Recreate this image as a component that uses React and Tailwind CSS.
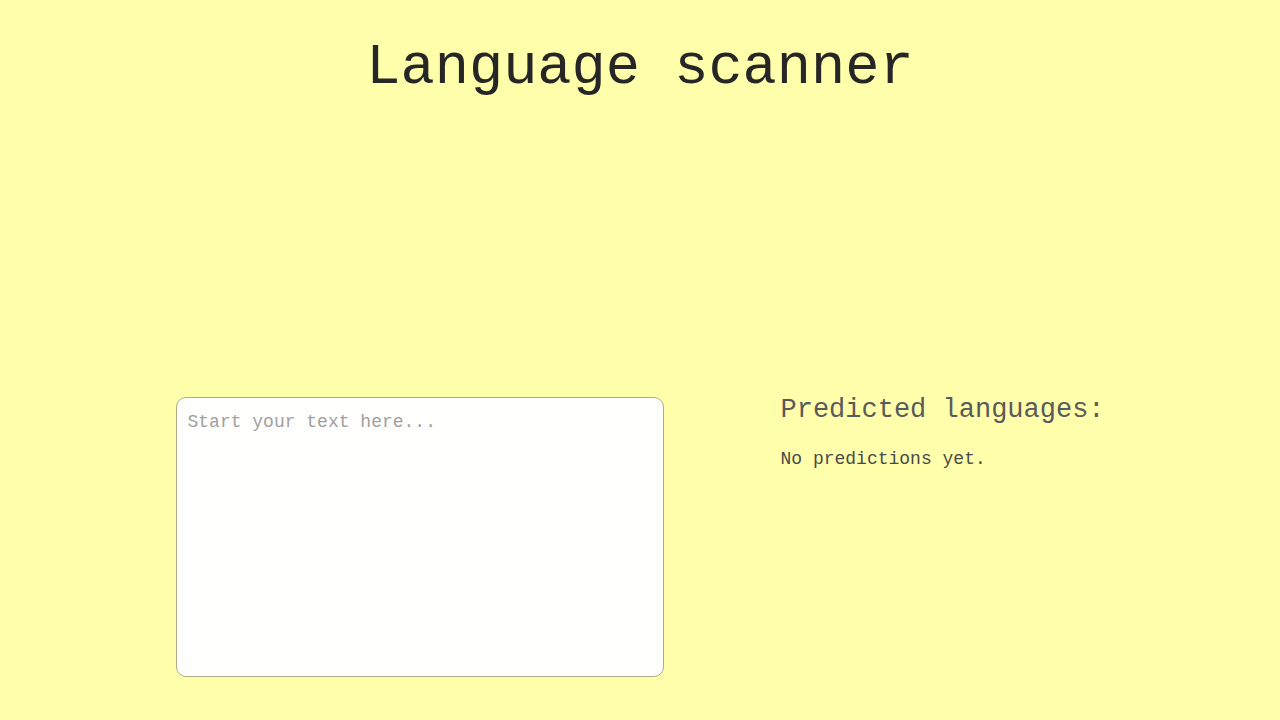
export default function App() {
  return (
    <div
      className="min-h-screen w-full bg-[#ffffab] text-[#111]"
      style={{
        fontFamily: '"Courier New", "Liberation Mono", monospace',
      }}
    >
      <h1 className="pt-[40px] text-center text-[57px] leading-none font-normal text-[#262626]">
        Language scanner
      </h1>

      <div className="mt-[300px] flex justify-center gap-[117px]">
        <textarea
          className="h-[280px] w-[488px] resize-none rounded-[10px] border border-[#aeab86] bg-[#fefefc] px-[11px] py-[11px] text-[18px] text-[#333] placeholder:text-[#a0a0a0] focus:outline-none"
          placeholder="Start your text here..."
        />
        <div className="w-[324px]">
          <h2 className="whitespace-nowrap text-[27px] leading-none font-normal text-[#5a5a5a]">
            Predicted languages:
          </h2>
          <p className="mt-[26px] whitespace-nowrap text-[18px] leading-none text-[#4a4a4a]">
            No predictions yet.
          </p>
        </div>
      </div>
    </div>
  );
}
